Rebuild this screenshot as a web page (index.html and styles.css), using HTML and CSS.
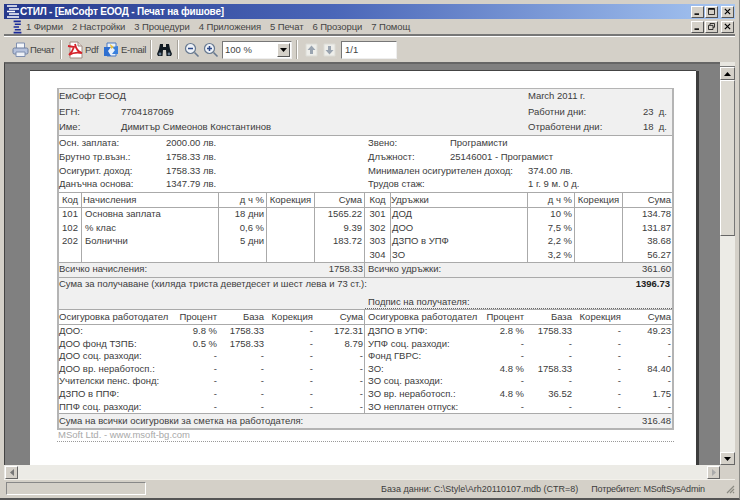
FILE: index.html
```html
<!DOCTYPE html>
<html lang="bg">
<head>
<meta charset="utf-8">
<title>СТИЛ</title>
<link rel="stylesheet" href="styles.css">
</head>
<body>
<div class="window">
  <div class="titlebar">
    <svg class="logo-small" width="14" height="13" viewBox="0 0 14 13"><path d="M1 1h10M3 4h10M1 6.500h8M3 9h10M1 12h12" stroke="#fff" stroke-width="1.300" fill="none"/></svg>
    <span class="title-text">СТИЛ - [ЕмСофт ЕООД - Печат на фишове]</span>
    <div class="winbtns">
      <span class="wbtn"><svg width="12" height="12" viewBox="0 0 12 12"><path d="M2 9.500h6" stroke="#000" stroke-width="2"/></svg></span>
      <span class="wbtn"><svg width="12" height="12" viewBox="0 0 12 12"><path d="M2 2.500h8M2 2v8h8V2" stroke="#000" fill="none"/><path d="M2 2.500h8" stroke="#000" stroke-width="2"/></svg></span>
      <span class="wbtn wbtn-gap"><svg width="12" height="12" viewBox="0 0 12 12"><path d="M2.500 2.500l7 7M9.500 2.500l-7 7" stroke="#000" stroke-width="1.600"/></svg></span>
    </div>
  </div>
  <div class="menubar">
    <svg class="logo-menu" width="9" height="14" viewBox="0 0 15 15" preserveAspectRatio="none"><path d="M1 1.500h12M3 4.500h10M1 7.500h9M3 10.500h10M1 13.500h13" stroke="#1a2a9a" stroke-width="1.700" fill="none"/></svg>
    <span class="menu-item">1 Фирми</span>
    <span class="menu-item">2 Настройки</span>
    <span class="menu-item">3 Процедури</span>
    <span class="menu-item">4 Приложения</span>
    <span class="menu-item">5 Печат</span>
    <span class="menu-item">6 Прозорци</span>
    <span class="menu-item">7 Помощ</span>
    <div class="winbtns">
      <span class="wbtn"><svg width="12" height="12" viewBox="0 0 12 12"><path d="M2 9.500h6" stroke="#000" stroke-width="2"/></svg></span>
      <span class="wbtn"><svg width="12" height="12" viewBox="0 0 12 12"><path d="M4 4V2h6v5H8M2 4.500h6V10H2z" stroke="#000" fill="#d4d0c8"/></svg></span>
      <span class="wbtn wbtn-gap"><svg width="12" height="12" viewBox="0 0 12 12"><path d="M2.500 2.500l7 7M9.500 2.500l-7 7" stroke="#000" stroke-width="1.600"/></svg></span>
    </div>
  </div>
  <div class="toolbar">
    <svg class="ic ic-print" width="17" height="17" viewBox="0 0 17 17"><path d="M4.500 7V2h8v5" fill="#f4f6fa" stroke="#7f8fb0"/><rect x="1" y="7" width="15" height="6" rx="1.500" fill="#b6c2dc" stroke="#6f7f9f"/><path d="M4 11h9v4.500H4z" fill="#eef1f7" stroke="#7f8fb0"/></svg>
    <span class="tb-label lbl-print">Печат</span>
    <span class="tb-sep sep-1"></span>
    <svg class="ic ic-pdf" width="17" height="18" viewBox="0 0 17 18"><path d="M3 1h8l4 4v12H3z" fill="#fff" stroke="#a08a80"/><path d="M11 1v4h4" fill="#e8e0d8" stroke="#a08a80"/><path d="M1 5l6 1c-1 3-3 6-5 8 3-2 8-3 13-2-4-1-6-4-7-9" fill="none" stroke="#d5222a" stroke-width="1.800"/></svg>
    <span class="tb-label lbl-pdf">Pdf</span>
    <svg class="ic ic-mail" width="16" height="17" viewBox="0 0 16 17"><path d="M4 2h9v13H4z" fill="#eaf2fb" stroke="#4a78c0"/><path d="M1 6h7l-3 4 3 5H1z" fill="#2f6fd0"/><path d="M15 5l-6 1 3 3-3 4h6z" fill="#3a80dd"/><path d="M7 3l4 3-3 2z" fill="#e8c040"/></svg>
    <span class="tb-label lbl-mail">E-mail</span>
    <span class="tb-sep sep-2"></span>
    <svg class="ic ic-bino" width="15" height="14" viewBox="0 0 15 14"><path d="M3 1h3v3h3V1h3l1 5 2 5-1 2H9.500L9 7H6l-.500 6H1l-1-2 2-5z" fill="#111a22"/><circle cx="3" cy="11" r="1.400" fill="#6b7f95"/><circle cx="12" cy="11" r="1.400" fill="#6b7f95"/></svg>
    <span class="tb-sep sep-3"></span>
    <svg class="ic ic-zoom1" width="16" height="16" viewBox="0 0 16 16"><circle cx="6.500" cy="6.500" r="5" fill="#eef2f8" stroke="#66788f" stroke-width="1.200"/><path d="M4 6.500h5" stroke="#2d4a8a" stroke-width="1.500"/><path d="M10.500 10.500l4 4" stroke="#66788f" stroke-width="1.600"/></svg>
    <svg class="ic ic-zoom2" width="16" height="16" viewBox="0 0 16 16"><circle cx="6.500" cy="6.500" r="5" fill="#eef2f8" stroke="#66788f" stroke-width="1.200"/><path d="M4 6.500h5M6.500 4v5" stroke="#2d4a8a" stroke-width="1.500"/><path d="M10.500 10.500l4 4" stroke="#66788f" stroke-width="1.600"/></svg>
    <div class="combo"><span class="combo-text">100 %</span><span class="combo-btn"><svg width="7" height="4" viewBox="0 0 7 4"><path d="M0 0h7L3.500 4z" fill="#000"/></svg></span></div>
    <span class="tb-sep sep-4"></span>
    <svg class="ic ic-up" width="13" height="15" viewBox="0 0 13 15"><path d="M1 2h11v12H1z" fill="#eeeeea" stroke="#dcdcd6"/><path d="M6.500 3.500l4 4.500H8v4H5V8H2.500z" fill="#9aa4b0"/></svg>
    <svg class="ic ic-down" width="13" height="15" viewBox="0 0 13 15"><path d="M1 2h11v12H1z" fill="#eeeeea" stroke="#dcdcd6"/><path d="M6.500 12.500L2.500 8H5V4h3v4h2.500z" fill="#9aa4b0"/></svg>
    <div class="pagebox">1/1</div>
  </div>
  <div class="workspace">
    <div class="view">
      <div class="page">
        <div class="report">
          <div class="r-head">
            <div class="rh-left">
              <div>ЕмСофт ЕООД</div>
              <div class="kv-head"><span>ЕГН:</span><span>7704187069</span></div>
              <div class="kv-head"><span>Име:</span><span>Димитър Симеонов Константинов</span></div>
            </div>
            <div class="rh-right">
              <div>March 2011 г.</div>
              <div class="kv-days"><span>Работни дни:</span><span>23&nbsp; д.</span></div>
              <div class="kv-days"><span>Отработени дни:</span><span>18&nbsp; д.</span></div>
            </div>
          </div>
          <div class="r-info">
            <div class="info-col">
              <div class="kv-info"><span>Осн. заплата:</span><span>2000.00 лв.</span></div>
              <div class="kv-info"><span>Брутно тр.възн.:</span><span>1758.33 лв.</span></div>
              <div class="kv-info"><span>Осигурит. доход:</span><span>1758.33 лв.</span></div>
              <div class="kv-info"><span>Данъчна основа:</span><span>1347.79 лв.</span></div>
            </div>
            <div class="info-col info-right">
              <div class="kv-a"><span>Звено:</span><span>Програмисти</span></div>
              <div class="kv-a"><span>Длъжност:</span><span>25146001 - Програмист</span></div>
              <div class="kv-b"><span>Минимален осигурителен доход:</span><span>374.00 лв.</span></div>
              <div class="kv-b"><span>Трудов стаж:</span><span>1 г. 9 м. 0 д.</span></div>
            </div>
          </div>
          <div class="halves">
            <div class="half half-l">
              <div class="pay-row pay-head"><span class="c">Код</span><span>Начисления</span><span class="n">д ч %</span><span class="c">Корекция</span><span class="n">Сума</span></div>
              <div class="pay-row"><span class="c">101</span><span>Основна заплата</span><span class="n">18 дни</span><span></span><span class="n">1565.22</span></div>
              <div class="pay-row"><span class="c">102</span><span>% клас</span><span class="n">0,6 %</span><span></span><span class="n">9.39</span></div>
              <div class="pay-row"><span class="c">202</span><span>Болнични</span><span class="n">5 дни</span><span></span><span class="n">183.72</span></div>
              <div class="pay-row"><span></span><span></span><span></span><span></span><span></span></div>
              <div class="total"><span>Всичко начисления:</span><span>1758.33</span></div>
            </div>
            <div class="half half-r">
              <div class="pay-row pay-head"><span class="c">Код</span><span>Удръжки</span><span class="n">д ч %</span><span class="c">Корекция</span><span class="n">Сума</span></div>
              <div class="pay-row"><span class="c">301</span><span>ДОД</span><span class="n">10 %</span><span></span><span class="n">134.78</span></div>
              <div class="pay-row"><span class="c">302</span><span>ДОО</span><span class="n">7,5 %</span><span></span><span class="n">131.87</span></div>
              <div class="pay-row"><span class="c">303</span><span>ДЗПО в УПФ</span><span class="n">2,2 %</span><span></span><span class="n">38.68</span></div>
              <div class="pay-row"><span class="c">304</span><span>ЗО</span><span class="n">3,2 %</span><span></span><span class="n">56.27</span></div>
              <div class="total"><span>Всичко удръжки:</span><span>361.60</span></div>
            </div>
          </div>
          <div class="net">
            <div class="net-line"><span>Сума за получаване (хиляда триста деветдесет и шест лева и 73 ст.):</span><b>1396.73</b></div>
            <div class="sign"><span>Подпис на получателя:</span></div>
          </div>
          <div class="halves">
            <div class="half half-l">
              <div class="ins-row ins-head"><span>Осигуровка работодател</span><span class="n">Процент</span><span class="n">База</span><span class="n">Корекция</span><span class="n">Сума</span></div>
              <div class="ins-row"><span>ДОО:</span><span class="n">9.8 %</span><span class="n">1758.33</span><span class="n">-</span><span class="n">172.31</span></div>
              <div class="ins-row"><span>ДОО фонд ТЗПБ:</span><span class="n">0.5 %</span><span class="n">1758.33</span><span class="n">-</span><span class="n">8.79</span></div>
              <div class="ins-row"><span>ДОО соц. разходи:</span><span class="n">-</span><span class="n">-</span><span class="n">-</span><span class="n">-</span></div>
              <div class="ins-row"><span>ДОО вр. неработосп.:</span><span class="n">-</span><span class="n">-</span><span class="n">-</span><span class="n">-</span></div>
              <div class="ins-row"><span>Учителски пенс. фонд:</span><span class="n">-</span><span class="n">-</span><span class="n">-</span><span class="n">-</span></div>
              <div class="ins-row"><span>ДЗПО в ППФ:</span><span class="n">-</span><span class="n">-</span><span class="n">-</span><span class="n">-</span></div>
              <div class="ins-row"><span>ППФ соц. разходи:</span><span class="n">-</span><span class="n">-</span><span class="n">-</span><span class="n">-</span></div>
            </div>
            <div class="half half-r">
              <div class="ins-row ins-head"><span>Осигуровка работодател</span><span class="n">Процент</span><span class="n">База</span><span class="n">Корекция</span><span class="n">Сума</span></div>
              <div class="ins-row"><span>ДЗПО в УПФ:</span><span class="n">2.8 %</span><span class="n">1758.33</span><span class="n">-</span><span class="n">49.23</span></div>
              <div class="ins-row"><span>УПФ соц. разходи:</span><span class="n">-</span><span class="n">-</span><span class="n">-</span><span class="n">-</span></div>
              <div class="ins-row"><span>Фонд ГВРС:</span><span class="n">-</span><span class="n">-</span><span class="n">-</span><span class="n">-</span></div>
              <div class="ins-row"><span>ЗО:</span><span class="n">4.8 %</span><span class="n">1758.33</span><span class="n">-</span><span class="n">84.40</span></div>
              <div class="ins-row"><span>ЗО соц. разходи:</span><span class="n">-</span><span class="n">-</span><span class="n">-</span><span class="n">-</span></div>
              <div class="ins-row"><span>ЗО вр. неработосп.:</span><span class="n">4.8 %</span><span class="n">36.52</span><span class="n">-</span><span class="n">1.75</span></div>
              <div class="ins-row"><span>ЗО неплатен отпуск:</span><span class="n">-</span><span class="n">-</span><span class="n">-</span><span class="n">-</span></div>
            </div>
          </div>
          <div class="grand"><span>Сума на всички осигуровки за сметка на работодателя:</span><span>316.48</span></div>
        </div>
        <div class="credit">MSoft Ltd. - www.msoft-bg.com</div>
      </div>
    </div>
    <div class="vscroll">
      <span class="vs-cap"></span>
      <span class="sbtn"><svg width="7" height="4" viewBox="0 0 7 4"><path d="M3.500 0L7 4H0z" fill="#000"/></svg></span>
      <span class="vs-thumb"></span>
      <span class="track"></span>
      <span class="sbtn"><svg width="7" height="4" viewBox="0 0 7 4"><path d="M0 0h7L3.500 4z" fill="#000"/></svg></span>
    </div>
    <div class="hscroll">
      <span class="sbtn sbtn-h"><svg width="4" height="7" viewBox="0 0 4 7"><path d="M4 0v7L0 3.500z" fill="#777"/></svg></span>
      <span class="track"></span>
      <span class="sbtn sbtn-h"><svg width="4" height="7" viewBox="0 0 4 7"><path d="M0 0v7l4-3.500z" fill="#aaa"/></svg></span>
    </div>
    <div class="corner"></div>
  </div>
  <div class="statusbar">
    <span class="st-panel"></span>
    <span class="st-db">База данни: C:\Style\Arh20110107.mdb (CTR=8)</span>
    <span class="st-user">Потребител: MSoftSysAdmin</span>
    <svg class="grip" width="10" height="10" viewBox="0 0 10 10"><path d="M9 2L2 9M9 5L5 9M9 8L8 9" stroke="#8a8a82" stroke-width="1.200"/></svg>
  </div>
</div>
</body>
</html>
```
FILE: styles.css
```css
* { box-sizing: border-box; }
html, body { margin: 0; padding: 0; }
body { width: 740px; height: 500px; overflow: hidden; background: #fff; }
.window {
  width: 740px; height: 500px; padding: 4px 4px 2px;
  background: #d4d0c8; display: flex; flex-direction: column;
  border-right: 1px solid #8a8a86; border-bottom: 2px solid #555;
  font: 9.500px "Liberation Sans", Arial, sans-serif; color: #333; white-space: nowrap;
}
.titlebar {
  height: 15px; flex: none; display: flex; align-items: center; padding-left: 2px;
  background: linear-gradient(90deg, #26398c 0%, #4a66b8 45%, #a6c6f2 100%);
}
.title-text { color: #fff; font: bold 10px "Liberation Sans", Arial, sans-serif; letter-spacing: -.2px; }
.winbtns { margin-left: auto; display: flex; gap: 1px; padding-right: 1px; }
.wbtn {
  width: 13px; height: 12px; display: flex; align-items: center; justify-content: center;
  background: #d4d0c8; border: 1px solid; border-color: #fff #555 #555 #fff;
}
.wbtn svg { width: 9px; height: 9px; }
.wbtn-gap { margin-left: 2px; }
.menubar { height: 17px; flex: none; display: flex; align-items: center; gap: 9px; padding-left: 9px; border-bottom: 2px solid #777; font-size: 9.500px; letter-spacing: -.1px; color: #444; }
.logo-menu { margin-right: -5px; }
.toolbar { height: 26px; flex: none; display: flex; align-items: center; padding-left: 8px; border-top: 1px solid #fff; font-size: 9.500px; color: #444; }
.ic { flex: none; }
.tb-label { margin-left: 1px; flex: none; letter-spacing: -.3px; }
.lbl-print { width: 24px; }
.lbl-pdf { width: 13px; }
.lbl-mail { width: 23px; margin-left: 2px; }
.tb-sep { width: 2px; height: 19px; flex: none; border-left: 1px solid #a8a49c; border-right: 1px solid #fff; }
.sep-1 { margin: 0 5px 0 6px; }
.ic-mail { margin-left: 5px; }
.sep-2 { margin: 0 5px 0 6px; }
.sep-3 { margin: 0 5px 0 5px; }
.ic-zoom2 { margin-left: 3px; }
.combo { width: 70px; height: 18px; margin-left: 3px; flex: none; display: flex; justify-content: space-between; background: #fff; border: 1px solid; border-color: #777 #eee #eee #777; padding: 1px; }
.combo-text { padding-left: 1px; line-height: 13px; }
.combo-btn { width: 13px; display: flex; align-items: center; justify-content: center; background: #d4d0c8; border: 1px solid; border-color: #fff #555 #555 #fff; }
.sep-4 { margin: 0 7px 0 4px; }
.ic-down { margin-left: 5px; }
.pagebox { width: 56px; height: 18px; margin-left: 5px; background: #fff; border: 1px solid; border-color: #777 #eee #eee #777; padding-left: 3px; line-height: 15px; }
.workspace { flex: 1; min-height: 0; display: grid; grid-template-columns: 1fr 15px; grid-template-rows: 1fr 14px; }
.view { background: #808080; overflow: hidden; padding: 9px 0 0 25px; border-top: 2px solid #666; border-left: 1px solid #444; min-height: 0; }
.page { width: 666px; height: 500px; margin-top: -2px; background: #fff; box-shadow: 3px 0 0 #3c3c3c, 0 -1px 0 #444; padding: 17px 22px 0 27px; }
.report { width: 617px; border: 2px solid #b4b4b4; border-top-width: 1px; color: #3c3c3c; }
.r-head { height: 47px; background: #f0f0f0; display: grid; grid-template-columns: 469px 1fr; border-bottom: 1px solid #aaa; }
.r-head > div > div { height: 15.500px; line-height: 14px; }
.kv-head { display: grid; grid-template-columns: 62px 1fr; }
.kv-days { display: flex; justify-content: space-between; padding-right: 5px; }
.r-info { height: 57px; display: grid; grid-template-columns: 309px 1fr; border-bottom: 1px solid #aaa; }
.info-col > div { height: 13.800px; line-height: 13.800px; }
.kv-info { display: grid; grid-template-columns: 107px 1fr; }
.kv-a { display: grid; grid-template-columns: 82px 1fr; }
.kv-b { display: grid; grid-template-columns: 160px 1fr; }
.halves { display: grid; grid-template-columns: 306px 1fr; }
.half-l { border-right: 1px solid #aaa; }
.pay-row { display: grid; height: 13.500px; line-height: 11.500px; }
.half-l .pay-row { grid-template-columns: 23px 137px 48px 48px 1fr; }
.half-r .pay-row { grid-template-columns: 26px 137px 47px 48px 1fr; }
.pay-row > span { border-right: 1px solid #aaa; padding: 0 2px; overflow: hidden; }
.pay-row > span:last-child { border-right: 0; }
.half-l .pay-row > span:nth-child(2) { padding-left: 3px; }
.half-r .pay-row > span:nth-child(2) { padding-left: 1px; }
.half-l .pay-head > span:nth-child(2) { padding-left: 1px; }
.half-r .pay-head > span:nth-child(2) { padding-left: 0; }
.half-r .pay-row > span:last-child { padding-right: 1px; }
.half-r .pay-head > span.c { padding: 0; }
.pay-head { height: 15px; line-height: 14px; border-bottom: 1px solid #aaa; background: #fff; }
.n { text-align: right; }
.c { text-align: center; }
.total { height: 15px; line-height: 12px; background: #f0f0f0; border-top: 1px solid #aaa; display: flex; justify-content: space-between; padding: 0 1px 0 0; }
.half-r .total { padding-left: 3px; }
.net { height: 33px; background: #f0f0f0; border-top: 1px solid #aaa; border-bottom: 1px solid #aaa; }
.net-line { display: flex; justify-content: space-between; height: 15px; line-height: 12px; padding: 0 2px 0 0; }
.net-line b { color: #222; }
.sign { margin: 1px 0 0 306px; height: 15px; line-height: 15px; padding-left: 3px; border-bottom: 1px dotted #666; }
.ins-row { display: grid; height: 12.600px; line-height: 11.600px; }
.half-l .ins-row { grid-template-columns: 113px 45px 47px 49px 1fr; padding-right: 1px; }
.half-r .ins-row { grid-template-columns: 110px 46px 48px 49px 1fr; padding-left: 3px; padding-right: 1px; }
.ins-head { height: 15px; line-height: 13px; border-bottom: 1px solid #aaa; }
.grand { height: 15px; line-height: 14px; background: #f0f0f0; border-top: 1px solid #aaa; display: flex; justify-content: space-between; padding: 0 1px 0 0; }
.credit { width: 617px; height: 12px; line-height: 10px; color: #a8a8a8; padding-left: 1px; border-bottom: 1px dotted #999; }
.vscroll { display: flex; flex-direction: column; background: #d4d0c8; min-height: 0; }
.vs-cap { height: 5px; flex: none; background: #e8e6e0; border-bottom: 1px solid #777; }
.sbtn { height: 13px; flex: none; display: flex; align-items: center; justify-content: center; background: #d4d0c8; border: 1px solid; border-color: #fff #666 #666 #fff; }
.vs-thumb { height: 156px; flex: none; background: #dcd9d1; border: 1px solid; border-color: #fff #777 #666 #fff; }
.track { flex: 1; background: #ecebe6; }
.hscroll { display: flex; background: #ecebe6; padding: 1px 0 0 1px; }
.sbtn-h { width: 13px; }
.corner { background: #d4d0c8; }
.statusbar { height: 17px; flex: none; display: flex; align-items: center; padding: 2px 0 1px 2px; color: #3c3c3c; font-size: 9px; border-top: 1px solid #f2f0ea; }
.st-panel { width: 140px; height: 13px; flex: none; border: 1px solid; border-color: #888 #fff #fff #888; }
.st-db { margin-left: 235px; }
.st-user { margin-left: 13px; letter-spacing: -.2px; }
.grip { margin-left: auto; }
```
